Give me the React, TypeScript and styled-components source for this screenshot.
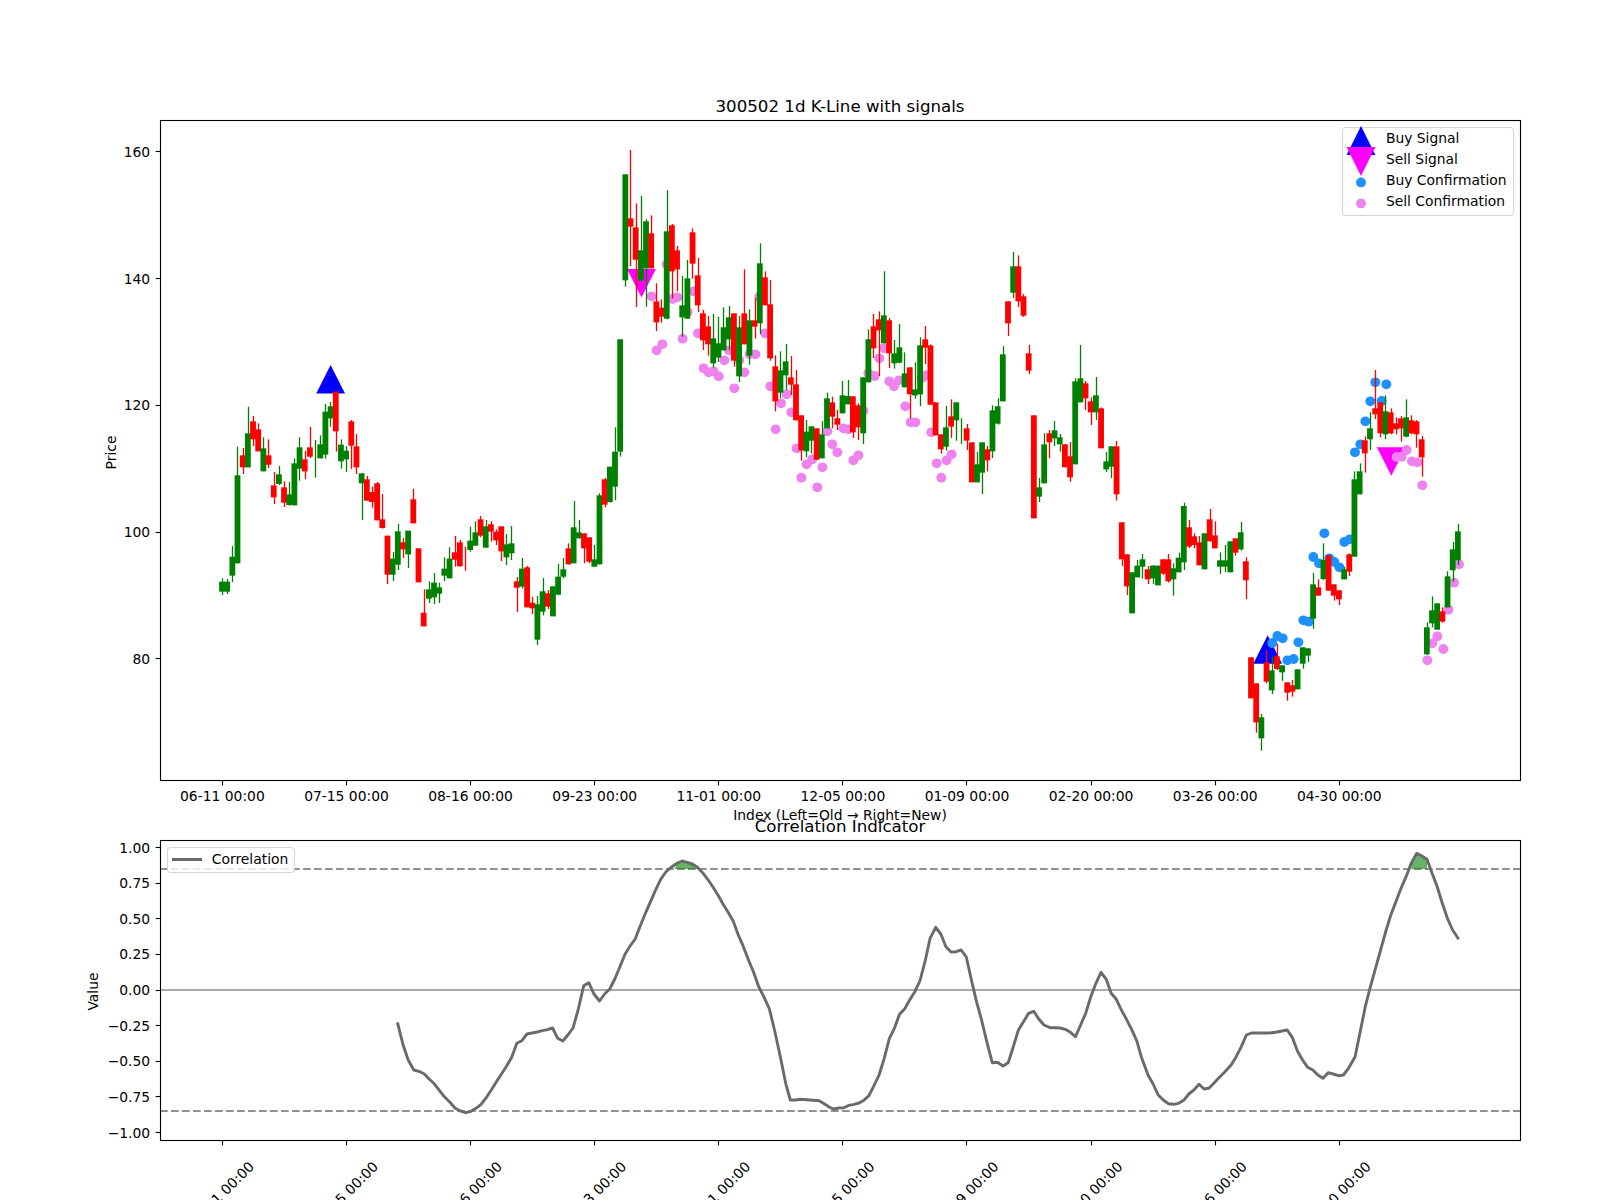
import React from "react";
import styled, { createGlobalStyle } from "styled-components";

const GlobalStyle = createGlobalStyle`
  html, body { margin: 0; padding: 0; background: #fff; overflow: hidden; }
  #root { width: 1600px; height: 1200px; }
`;

const FONT = `"DejaVu Sans", "Liberation Sans", sans-serif`;

const Figure = styled.main`
  width: 1600px;
  height: 1200px;
  display: flex;
  flex-direction: column;
  overflow: hidden;
  background: #fff;
  font-family: ${FONT};
`;

const Subplot = styled.section<{ $h: number }>`
  position: relative;
  height: ${(p) => p.$h}px;
  flex: none;
`;

const ChartSvg = styled.svg`
  display: block;
  width: 1600px;
  height: 100%;
  overflow: visible;
`;

const Spine = styled.rect`
  fill: none;
  stroke: #000;
  stroke-width: 1.11;
`;

const Tick = styled.line`
  stroke: #000;
  stroke-width: 1.11;
`;

const TickLabel = styled.text`
  font-family: ${FONT};
  font-size: 13.89px;
  fill: #000;
`;

const AxisTitle = styled.text`
  font-family: ${FONT};
  font-size: 13.89px;
  fill: #000;
  text-anchor: middle;
`;

const PlotTitle = styled.text`
  font-family: ${FONT};
  font-size: 16.67px;
  fill: #000;
  text-anchor: middle;
`;

const Legend = styled.aside<{ $left: number; $top: number; $w: number; $h: number }>`
  position: absolute;
  left: ${(p) => p.$left}px;
  top: ${(p) => p.$top}px;
  width: ${(p) => p.$w}px;
  height: ${(p) => p.$h}px;
  box-sizing: border-box;
  display: flex;
  flex-direction: column;
  background: rgba(255, 255, 255, 0.8);
  border: 1px solid rgba(204, 204, 204, 0.8);
  border-radius: 4px;
  font-size: 13.89px;
  line-height: 16px;
  color: #000;
`;

const LegendRow = styled.div<{ $pad?: number }>`
  display: flex;
  align-items: center;
  height: 20.75px;
  padding-top: ${(p) => p.$pad ?? 0}px;
  white-space: nowrap;
`;

const LegendMark = styled.svg`
  display: block;
  flex: none;
  width: 30px;
  height: 30px;
  margin: 0 10.2px 0 2.7px;
  overflow: visible;
`;

const LineSwatch = styled.span`
  display: block;
  flex: none;
  width: 30px;
  height: 2.8px;
  margin: 0 9.5px 0 4.3px;
  background: #6a6a6a;
`;

/* ---------- candle data, read from the chart (G = green, R = red) ---------- */
type C = [0 | 1, number, number, number, number];
const G = 0 as const;
const R = 1 as const;

const seg1: C[] = [
  [G,755,785,745,795],[G,755,785,747,792],[G,680,737,648,756],[G,436,700,350,700],[R,376,412,354,432],
  [G,310,412,230,412],[R,274,328,258,348],[R,298,364,280,364],[G,355,424,322,424],[R,376,404,328,414],
  [R,466,502,426,522],[G,433,462,408,465],[R,472,518,454,531],[G,493,525,456,527],[G,400,526,385,526],
  [G,352,416,322,452],[R,388,424,363,447],[R,352,380,291,384],[G,390,390,330,443],[G,343,385,316,385],
  [G,245,374,222,386],[G,229,265,216,290],[R,185,304,185,365],[G,344,394,328,416],[G,362,388,348,426],
  [R,274,347,270,417],[R,349,412,312,432],[G,430,460,430,570],[R,448,512,438,512],[R,486,516,470,533],
  [R,460,571,456,571],[R,568,594,492,596],[R,617,734,617,762],[G,686,734,666,753],[G,604,704,582,720],
  [R,637,658,624,684],[G,602,673,602,714],[R,508,580,477,580],[R,655,757,655,757],[R,848,889,778,889],
  [G,778,806,754,819],[G,758,802,729,822],[G,772,791,758,819],[G,716,737,682,753],[G,686,745,652,745],
  [R,667,689,618,710],[R,637,709,630,709],[R,686,686,650,722],[G,632,660,590,665],[G,607,647,574,647],
  [R,568,617,558,622],[G,589,653,570,653],[R,583,605,574,635],[R,605,631,598,645],[R,589,664,589,693],
  [G,643,682,612,705],[G,640,670,588,690],[R,754,773,741,846],[G,716,770,684,776],[R,712,832,708,832],
  [R,818,835,800,852],[G,823,929,798,945],[G,784,845,744,856],[R,790,830,780,837],[G,769,859,769,859],
  [G,740,794,702,796],[G,718,740,684,745],[R,655,703,640,703],[G,592,700,513,700],[G,607,625,570,625],
  [R,610,655,610,700],[R,622,695,622,700],[G,688,710,645,710],[G,496,703,490,703],
];

const seg2: C[] = [
  [R,1048,1124,1044,1132],[G,1010,1116,1010,1118],[G,965,1070,892,1110],[G,628,965,628,980],[G,133,451,133,470],
  [R,265,290,60,408],[R,292,389,220,531],[G,361,452,198,452],[G,274,415,268,530],[R,310,415,256,415],
  [R,514,577,460,603],[R,533,560,508,578],[G,304,566,181,568],[R,286,424,282,505],[R,361,418,348,484],
  [G,526,562,438,620],[G,445,566,390,566],[R,307,401,295,446],[R,436,526,384,546],[R,550,631,540,660],
  [R,589,643,558,677],[G,625,700,552,712],[G,640,683,560,696],[G,592,661,532,661],[G,562,628,528,660],
  [R,550,692,550,710],[G,592,739,558,756],[R,550,643,418,643],[G,571,677,538,704],[R,571,590,504,626],
  [G,400,580,340,612],[R,442,526,424,526],[R,523,685,450,692],[R,709,814,676,844],[G,721,788,664,805],
  [G,694,736,642,780],[R,742,764,678,795],[R,763,871,720,871],[R,856,961,856,992],[G,905,964,870,982],
  [G,889,932,889,970],[R,895,989,895,989],[G,913,985,873,985],[G,805,895,788,895],[R,817,860,800,895],
  [R,865,884,840,900],[G,796,850,753,850],[G,798,823,750,823],[R,799,907,799,924],[R,826,892,820,930],
  [G,742,910,742,942],[G,628,757,598,757],[R,589,655,552,684],[R,568,601,544,738],[G,556,640,424,640],
  [R,571,670,564,714],[G,670,700,630,716],[G,652,698,582,700],[G,730,772,667,772],[R,712,793,712,865],
  [G,778,796,697,806],[G,646,793,622,828],[R,628,653,588,702],[R,646,824,643,824],[R,817,916,817,916],
  [R,913,958,913,971],[G,892,950,828,962],[R,859,890,808,924],[G,817,871,817,932],[G,900,900,865,942],
  [R,895,932,882,960],[R,937,1057,937,1057],[G,1003,1057,966,1057],[G,937,1028,937,1092],[R,958,991,948,1024],
  [G,841,964,826,984],[G,829,881,805,884],[G,673,814,648,814],[R,514,580,514,618],[G,409,488,366,504],
  [R,409,514,376,531],[R,499,557,492,561],[R,670,722,645,732],[R,856,1165,856,1165],[G,1072,1100,1044,1116],
  [G,943,1060,910,1060],[R,910,937,900,985],
];

const seg3: C[] = [
  [G,601,625,573,648],[G,622,643,612,665],[R,643,712,643,712],[R,679,742,636,755],[G,454,703,445,703],
  [G,445,517,345,517],[R,460,505,453,540],[R,514,547,502,585],[G,496,547,441,570],[R,535,655,532,655],
  [G,694,718,666,726],[G,649,710,649,744],[R,649,793,633,812],
];

const seg4: C[] = [
  [R,127,238,127,258],[R,223,319,223,345],[G,277,400,277,400],[G,257,292,240,292],[G,238,260,222,296],
  [R,268,298,258,312],[G,257,295,255,312],[G,257,316,257,316],[R,238,281,238,285],[R,238,304,222,308],
  [G,265,298,250,347],[G,233,277,218,277],[G,78,247,68,270],[R,142,200,120,204],[R,169,195,160,204],
  [R,187,256,168,256],
];

const seg5: C[] = [
  [G,580,688,580,688],[R,538,604,507,604],[R,586,625,544,625],[G,661,680,637,702],[G,661,680,615,696],
  [G,604,697,604,697],[R,595,638,595,647],[G,577,628,546,632],[R,664,721,652,777],[R,952,1075,952,1075],
  [R,1030,1147,1030,1178],[G,1132,1195,1122,1232],[R,967,1025,930,1030],[G,991,1051,950,1062],[R,949,987,912,990],
  [G,976,997,976,1023],[R,1027,1058,1027,1082],[R,1036,1055,1020,1070],[G,988,1048,988,1048],[G,922,971,922,986],
  [G,925,947,925,966],[G,733,836,699,866],[R,742,767,718,767],[G,660,717,610,720],[R,646,752,646,752],
  [R,733,767,733,782],[R,751,778,751,795],[G,688,718,680,718],[R,643,695,640,708],[G,418,650,394,650],
  [G,394,463,370,463],[R,301,340,289,398],[G,265,298,217,330],[R,205,223,90,237],[R,187,280,187,292],
  [G,214,283,166,297],[R,217,280,205,283],[R,250,268,232,283],[R,235,265,228,305],[G,232,290,178,292],
  [R,241,280,226,283],[R,244,283,240,323],[R,298,352,288,410],[G,862,943,847,945],[G,811,850,769,862],
  [G,790,869,790,869],[R,814,845,802,848],[G,709,802,694,802],[G,628,691,606,725],[G,574,661,552,675],
];

const toReal = (rows: C[], y0: number) =>
  rows.map(([c, a, b, d, e]) => [c, y0 + a / 3, y0 + b / 3, y0 + d / 3, y0 + e / 3] as C);

const candles: C[] = [
  ...toReal(seg1, 330),
  ...toReal(seg2, 130),
  ...toReal(seg3, 230),
  ...toReal(seg4, 480),
  ...toReal(seg5, 340),
];

const candleX = (i: number) => 222.4 + 5.171 * i;

const violetA = [
  [155,499],[200,403],[218,507],[232,502],[280,484],[170,661],[187,643],[248,626],[263,546],[294,610],
  [311,715],[326,727],[341,724],[356,739],[373,691],[387,661],[403,775],[418,691],[433,727],[449,672],
  [466,673],[478,500],[495,610],[511,769],[527,898],[543,820],[560,793],[574,847],[590,955],[604,1043],
  [620,1003],[637,988],[652,1072],[667,1012],[682,904],[697,943],[712,967],[730,895],[745,898],[760,991],
  [775,976],[790,842],[805,730],[824,738],[838,685],[852,655],[868,754],[882,769],[897,751],[916,829],
  [932,877],[946,877],[965,745],[978,736],[994,907],[1010,1000],[1024,1043],[1040,991],[1055,973],
].map(([x, y]) => [600 + x / 3, 130 + y / 3]);

const violetB = [
  [590,351],[605,350],[620,330],[636,364],[652,367],[667,436],[682,961],[697,910],[712,889],[730,927],
  [745,809],[762,728],[777,673],
].map(([x, y]) => [1200 + x / 3, 340 + y / 3]);

const blue = [
  [217,909],[232,888],[248,895],[262,961],[281,957],[295,907],[310,841],[326,845],[340,651],[357,670],
  [373,580],[388,655],[403,666],[418,682],[433,606],[449,598],[465,337],[481,313],[496,244],[511,184],
  [526,127],[545,183],[559,133],
].map(([x, y]) => [1200 + x / 3, 340 + y / 3]);

const corrA = [
  [779,727],[790,795],[800,840],[811,870],[821,874],[831,881],[841,897],[852,913],[862,933],[872,952],
  [882,967],[892,985],[903,993],[913,998],[923,994],[933,985],[943,973],[953,953],[963,930],[973,905],
  [983,882],[993,858],[1003,832],[1013,790],[1023,782],[1033,762],[1043,759],[1053,756],[1063,752],[1073,749],
  [1083,744],[1093,775],[1103,783],[1113,765],[1123,744],[1133,690],[1144,617],[1154,608],[1164,642],[1175,663],
  [1185,642],[1195,627],[1205,597],[1215,560],[1225,523],[1235,498],[1245,477],[1255,437],[1265,400],[1275,365],
  [1285,330],[1295,298],[1305,276],[1317,260],[1327,250],[1337,243],[1347,247],[1357,252],[1367,262],[1377,278],
  [1387,298],[1397,320],[1407,345],[1417,372],[1427,397],[1437,423],[1447,465],[1457,500],[1467,540],[1477,577],
  [1487,620],[1497,650],[1508,687],[1518,750],[1528,820],[1540,910],[1549,960],[1560,960],
];

const corrB = [
  [0,958],[20,960],[38,962],[48,972],[58,982],[66,987],[76,984],[86,983],[96,976],[106,973],
  [116,969],[125,961],[135,947],[145,917],[155,885],[165,835],[175,776],[185,745],[195,703],[205,687],
  [215,660],[225,635],[235,603],[245,545],[255,475],[266,442],[276,462],[286,500],[296,516],[306,515],
  [316,510],[326,531],[336,600],[346,665],[356,720],[367,790],[377,848],[387,847],[398,858],[408,848],
  [418,800],[428,750],[438,725],[448,700],[458,694],[468,717],[478,735],[490,743],[500,743],[510,744],
  [520,748],[530,757],[540,770],[550,735],[560,700],[570,650],[580,610],[590,577],[600,597],[610,640],
  [620,658],[630,690],[640,718],[650,748],[660,782],[670,835],[682,885],[692,912],[702,945],[712,960],
  [722,971],[732,973],[742,970],[752,961],[762,942],[772,930],[782,913],[792,927],[802,924],[812,908],
  [822,892],[832,877],[845,855],[855,830],[865,800],[875,765],[885,759],[895,759],[905,759],[915,759],
  [925,758],[935,756],[945,753],[955,750],[965,772],[975,813],[985,840],[995,862],[1005,870],[1015,885],
  [1025,895],[1035,878],[1045,882],[1055,887],[1065,885],[1075,865],[1088,830],[1098,755],[1108,680],[1118,620],
  [1128,565],[1138,510],[1148,455],[1158,405],[1168,365],[1178,325],[1188,290],[1198,250],[1209,220],[1219,228],
  [1229,238],[1239,280],[1249,320],[1259,370],[1269,415],[1279,450],[1291,478],
];

const ptsA = (rows: number[][]) => rows.map(([x, y]) => `${(x / 1.96).toFixed(1)},${(780 + y / 3).toFixed(1)}`).join(" ");
const ptsB = (rows: number[][]) => rows.map(([x, y]) => `${(800 + x / 1.96).toFixed(1)},${(780 + y / 3).toFixed(1)}`).join(" ");

const dateLabels = ["06-11", "07-15", "08-16", "09-23", "11-01", "12-05", "01-09", "02-20", "03-26", "04-30"];
const tickXs = dateLabels.map((_, i) => 222.4 + 124.1 * i);
const snap = (v: number) => Math.floor(v) + 0.5;
const priceTicks = [160, 140, 120, 100, 80];
const priceY = (p: number) => 532 - (p - 100) * 6.335;
const valueTicks = [1, 0.75, 0.5, 0.25, 0, -0.25, -0.5, -0.75, -1];
const valueY = (v: number) => 990 - 142.5 * v;
const fmtValue = (v: number) => (v < 0 ? "\u2212" : "") + Math.abs(v).toFixed(2);

const TRI = "M -14.4 14.2 L 0 -14.2 L 14.4 14.2 Z";

const Triangle = ({ x, y, up, color }: { x: number; y: number; up: boolean; color: string }) => (
  <path d={TRI} transform={`translate(${x} ${y}) scale(1 ${up ? 1 : -1})`} fill={color} />
);

const Candles = () => (
  <g>
    {candles.map(([c, bt, bb, wt, wb], i) => {
      const x = candleX(i);
      const color = c === G ? "#008000" : "#ff0000";
      return (
        <g key={i}>
          <line x1={snap(x)} x2={snap(x)} y1={wt} y2={wb} stroke={color} strokeWidth={1.3} />
          {bb > bt && <rect x={x - 3.3} y={bt} width={5.8} height={bb - bt} fill={color} />}
        </g>
      );
    })}
  </g>
);

const YTicks = ({ items }: { items: { y: number; label: string }[] }) => (
  <g>
    {items.map((t) => (
      <g key={t.label}>
        <Tick x1={155.6} x2={160} y1={snap(t.y)} y2={snap(t.y)} />
        <TickLabel x={150.2} y={t.y + 5} textAnchor="end">
          {t.label}
        </TickLabel>
      </g>
    ))}
  </g>
);

const PriceChart = () => (
  <ChartSvg viewBox="0 0 1600 810">
    <PlotTitle x={840} y={111.5}>300502 1d K-Line with signals</PlotTitle>
    <Triangle x={330.6} y={379.2} up color="#0000ff" />
    <Triangle x={1267.7} y={649.5} up color="#0000ff" />
    <Triangle x={641.5} y={283.3} up={false} color="#ff00ff" />
    <Triangle x={1391.3} y={461.5} up={false} color="#ff00ff" />
    {[...violetA, ...violetB].map(([x, y], i) => (
      <circle key={i} cx={x} cy={y} r={4.95} fill="#ee82ee" />
    ))}
    {blue.map(([x, y], i) => (
      <circle key={i} cx={x} cy={y} r={4.95} fill="#1e90ff" />
    ))}
    <Candles />
    <Spine x={160.5} y={120.5} width={1360} height={660} />
    <YTicks items={priceTicks.map((p) => ({ y: priceY(p), label: String(p) }))} />
    {tickXs.map((x, i) => (
      <g key={x}>
        <Tick x1={snap(x)} x2={snap(x)} y1={781} y2={785.4} />
        <TickLabel x={x} y={801} textAnchor="middle">
          {dateLabels[i]} 00:00
        </TickLabel>
      </g>
    ))}
    <AxisTitle x={840} y={820}>Index (Left=Old → Right=New)</AxisTitle>
    <AxisTitle transform="translate(116 452.5) rotate(-90)">Price</AxisTitle>
  </ChartSvg>
);

const CorrelationChart = () => (
  <ChartSvg viewBox="0 810 1600 390">
    <PlotTitle x={840} y={832}>Correlation Indicator</PlotTitle>
    <line x1={160} x2={1520} y1={990} y2={990} stroke="#aaaaaa" strokeWidth={2} />
    <line x1={160} x2={1520} y1={869} y2={869} stroke="#909090" strokeWidth={2} strokeDasharray="7.7 3.3" />
    <line x1={160} x2={1520} y1={1111} y2={1111} stroke="#909090" strokeWidth={2} strokeDasharray="7.7 3.3" />
    <polygon points={ptsA([[1322,267],[1327,250],[1337,243],[1347,247],[1357,252],[1367,262],[1370,267]])} fill="#008000" fillOpacity={0.6} />
    <polygon points={ptsB([[1198,267],[1198,250],[1209,220],[1219,228],[1229,238],[1229,267]])} fill="#008000" fillOpacity={0.6} />
    <polyline points={`${ptsA(corrA)} ${ptsB(corrB)}`} fill="none" stroke="#6a6a6a" strokeWidth={2.9} strokeLinejoin="round" />
    <Spine x={160.5} y={840.5} width={1360} height={300} />
    <YTicks items={valueTicks.map((v) => ({ y: valueY(v), label: fmtValue(v) }))} />
    {tickXs.map((x, i) => (
      <g key={x}>
        <Tick x1={snap(x)} x2={snap(x)} y1={1141} y2={1145.4} />
        <TickLabel
          x={0}
          y={5}
          textAnchor="middle"
          transform={`translate(${x - 1} 1194) rotate(-45)`}
        >
          {dateLabels[i]} 00:00
        </TickLabel>
      </g>
    ))}
    <AxisTitle transform="translate(98 991.5) rotate(-90)">Value</AxisTitle>
  </ChartSvg>
);

const Mark = ({ children }: { children: React.ReactNode }) => (
  <LegendMark viewBox="-15 -15 30 30">{children}</LegendMark>
);

export default function App() {
  return (
    <>
      <GlobalStyle />
      <Figure>
        <Subplot $h={810}>
          <PriceChart />
          <Legend $left={1342} $top={127} $w={171.5} $h={89}>
            <LegendRow>
              <Mark><path d="M -14.4 17 L 0 -12 L 14.4 17 Z" fill="#0000ff" /></Mark>
              Buy Signal
            </LegendRow>
            <LegendRow>
              <Mark><path d="M -14.4 -12 L 0 17 L 14.4 -12 Z" fill="#ff00ff" /></Mark>
              Sell Signal
            </LegendRow>
            <LegendRow>
              <Mark><circle cx={0} cy={2.4} r={4.95} fill="#1e90ff" /></Mark>
              Buy Confirmation
            </LegendRow>
            <LegendRow>
              <Mark><circle cx={0} cy={2.4} r={4.95} fill="#ee82ee" /></Mark>
              Sell Confirmation
            </LegendRow>
          </Legend>
        </Subplot>
        <Subplot $h={390}>
          <CorrelationChart />
          <Legend $left={167} $top={37} $w={127.5} $h={25.5}>
            <LegendRow $pad={1}>
              <LineSwatch />
              Correlation
            </LegendRow>
          </Legend>
        </Subplot>
      </Figure>
    </>
  );
}
